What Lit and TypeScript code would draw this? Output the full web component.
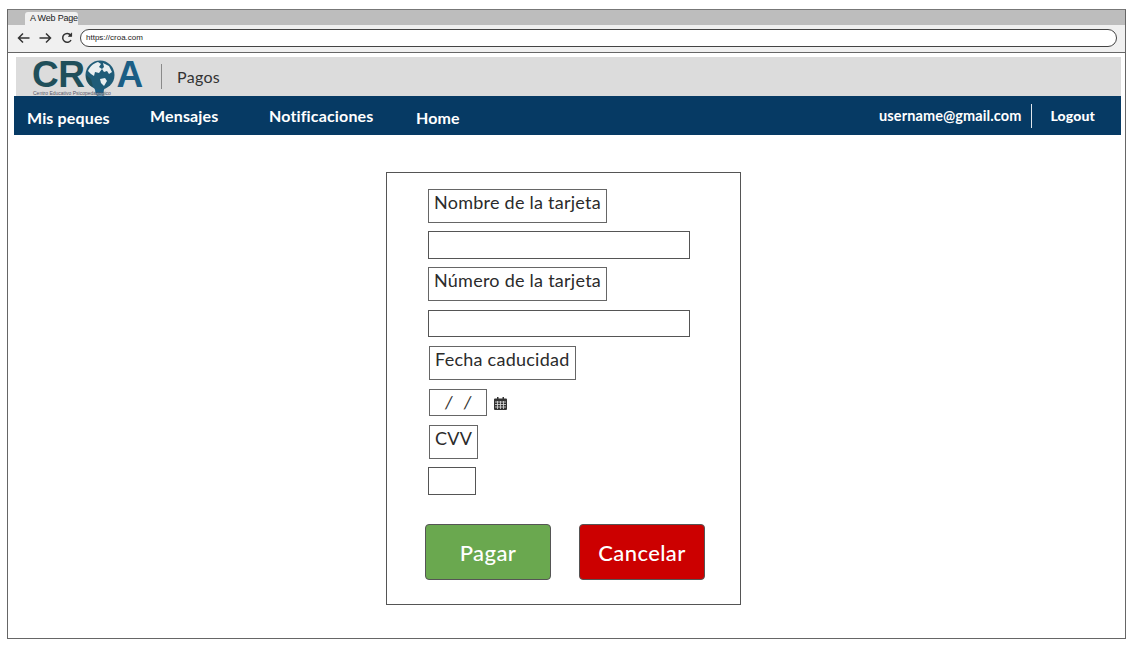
import { LitElement, html, css } from "lit";
import { customElement } from "lit/decorators.js";

@customElement("app-root")
export class AppRoot extends LitElement {
  static styles = css`
    :host { display: block; width: 1134px; height: 646px; background: #fff; font-family: "Lato", "Noto Sans", sans-serif; color: #333; overflow: hidden; }
    * { box-sizing: border-box; }
    .page { padding: 9px 8px 7px 7px; height: 646px; }
    .frame { height: 630px; border: 1px solid #666; border-top-color: #777; display: flex; flex-direction: column; }
    .tabbar { height: 15px; background: #bdbdbd; padding: 2px 0 0 17px; flex: none; }
    .tab { width: 53px; height: 13px; background: #f0f0f0; border-radius: 3px 3px 0 0; font: 9px/13px "Liberation Sans", sans-serif; padding-left: 5px; letter-spacing: -0.2px; color: #222; }
    .toolbar { height: 28px; background: #f0f0f0; border-bottom: 1px solid #666; display: flex; align-items: center; padding: 0 8px 1px 9px; flex: none; }
    .toolbar svg { display: block; flex: none; }
    .nav-icons { display: flex; gap: 9px; align-items: center; width: 63px; }
    .url { flex: 1; height: 18px; border: 1.4px solid #444; border-radius: 9px; background: #fff; font: 8px/15px "Liberation Sans", sans-serif; padding-left: 5px; color: #222; }
    .content { padding: 4px 4px 0 6px; flex: 1; display: flex; flex-direction: column; }
    .head { height: 39px; background: #dcdcdc; margin: 0 0 0 2px; display: flex; align-items: center; padding: 0 0 0 16px; flex: none; }
    .logo { position: relative; width: 112px; height: 39px; display: flex; align-items: flex-start; color: #1f4f5a; font: 900 37px/32px "Liberation Sans", sans-serif; padding-top: 2px; flex: none; letter-spacing: -0.5px; }
    .logo .a { color: #1b5e85; }
    .logo svg { flex: none; margin: 0 -1px; }
    .logo small { position: absolute; left: 1px; top: 33px; font: 5px/6px "Liberation Sans", sans-serif; color: #556; letter-spacing: 0; white-space: nowrap; }
    .vsep { width: 1px; height: 25px; background: #8a8a8a; margin: 0 15px 0 17px; }
    .title { font-size: 16px; color: #333; letter-spacing: 0.3px; }
    .bar { height: 39px; background: #063a64; color: #fff; display: flex; align-items: center; flex: none; font-size: 16px; font-weight: 700; letter-spacing: 0.15px; padding: 0 26px 0 13px; }
    .item { white-space: nowrap; }
    .lo { padding-top: 4px; }
    .hi { padding-bottom: 0; }
    .i1 { width: 123px; }
    .i2 { width: 119px; }
    .i3 { width: 147px; }
    .spacer { flex: 1; }
    .user { font-size: 14.5px; letter-spacing: 0.1px; }
    .sep { width: 1px; height: 24px; background: #dfe6ec; margin: 0 18px 0 10px; }
    .logout { font-size: 14px; font-weight: 900; }
    .main { flex: 1; display: flex; justify-content: center; padding: 37px 8px 0 0; }
    .card { width: 355px; height: 433px; border: 1px solid #555; padding: 16px 0 0 41px; display: flex; flex-direction: column; align-items: flex-start; }
    .label { height: 34px; border: 1px solid #666; font-size: 18px; line-height: 24px; padding: 0 5px; color: #2b2b2b; letter-spacing: 0.25px; white-space: nowrap; }
    .input { height: 28px; border: 1px solid #555; background: #fff; margin: 8px 0; }
    .wide { width: 262px; }
    .shift { margin-left: 1px; }
    .short { height: 27px; margin: 9px 0; }
    .date-row { display: flex; align-items: center; gap: 7px; margin: 9px 0; margin-left: 1px; }
    .date { width: 58px; height: 27px; border: 1px solid #666; font-size: 18px; line-height: 24px; padding-left: 15px; letter-spacing: 0; word-spacing: 7px; font-style: italic; }
    .cvv { width: 48px; }
    .actions { display: flex; gap: 28px; margin: 21px 0 0 -3px; }
    .btn { width: 126px; height: 56px; border: 1px solid #555; border-radius: 4px; color: #fff; font-size: 22px; font-weight: 500; display: flex; align-items: center; justify-content: center; letter-spacing: 0.4px; }
    .pay { background: #6aa84f; }
    .cancel { background: #cc0000; }
  `;

  render() {
    return html`<div class="page"><div class="frame">
      <div class="tabbar"><div class="tab">A Web Page</div></div>
      <div class="toolbar">
        <div class="nav-icons">
          <svg width="13" height="12" viewBox="0 0 13 12" fill="none" stroke="#333" stroke-width="1.5"><path d="M12.5 6H1.5M6 1.5L1.5 6L6 10.5"/></svg>
          <svg width="13" height="12" viewBox="0 0 13 12" fill="none" stroke="#333" stroke-width="1.5"><path d="M.5 6H11.5M7 1.5L11.5 6L7 10.5"/></svg>
          <svg width="12" height="12" viewBox="0 0 12 12" fill="none" stroke="#333" stroke-width="1.5"><path d="M10 8A4.4 4.4 0 1 1 9.6 3.2"/><path d="M10.8.8V4.4H7.2" fill="#333" stroke="none"/><path d="M10.8.8V4.4H7.2Z" fill="#333" stroke-width=".3"/></svg>
        </div>
        <div class="url">https://croa.com</div>
      </div>
      <div class="content">
        <div class="head">
          <div class="logo">
            <span>CR</span>
            <svg width="34" height="39" viewBox="0 0 34 39">
              <path d="M11 28h11l-2 6h-7z" fill="#1b5e85"/>
              <path d="M12 33h9M13 35h8M14 37h6" stroke="#1b5e85" stroke-width="1.2"/>
              <circle cx="17" cy="16" r="14.5" fill="#1f5c78"/>
              <path d="M5 12C7 7 11 4 15 3l3 2-2 3 3 2-3 4-4-1-1 4-3-2z" fill="#e8eef0"/>
              <path d="M20 4l6 3 3 6-3 2-2-3-3 1-2-3 2-2z" fill="#e8eef0"/>
              <path d="M17 20l5-1 2 3-3 5-3-3z" fill="#e8eef0"/>
              <path d="M3 16c0 6 3 10 7 12l-2-8z" fill="#1f4f5a"/>
            </svg>
            <span class="a">A</span>
            <small>Centro Educativo Psicopedagógico</small>
          </div>
          <div class="vsep"></div>
          <div class="title">Pagos</div>
        </div>
        <div class="bar">
          <div class="item lo i1">Mis peques</div>
          <div class="item i2">Mensajes</div>
          <div class="item i3">Notificaciones</div>
          <div class="item lo">Home</div>
          <div class="spacer"></div>
          <div class="item user">username@gmail.com</div>
          <div class="sep"></div>
          <div class="item logout">Logout</div>
        </div>
        <div class="main">
          <div class="card">
            <div class="label">Nombre de la tarjeta</div>
            <div class="input wide"></div>
            <div class="label">Número de la tarjeta</div>
            <div class="input wide shift short"></div>
            <div class="label shift">Fecha caducidad</div>
            <div class="date-row">
              <div class="date">/ /</div>
              <svg width="13" height="14" viewBox="0 0 13 14"><path fill="#333" d="M1 2.5h2V1h1.5v1.5h4V1H10v1.5h2a1 1 0 0 1 1 1V13a1 1 0 0 1-1 1H1a1 1 0 0 1-1-1V3.500a1 1 0 0 1 1-1z"/><path stroke="#ddd" stroke-width=".8" d="M1 6h11M1 8.500h11M1 11h11M3.500 5v8M6.500 5v8M9.500 5v8"/></svg>
            </div>
            <div class="label shift">CVV</div>
            <div class="input cvv"></div>
            <div class="actions">
              <div class="btn pay">Pagar</div>
              <div class="btn cancel">Cancelar</div>
            </div>
          </div>
        </div>
      </div>
    </div></div>`;
  }
}
